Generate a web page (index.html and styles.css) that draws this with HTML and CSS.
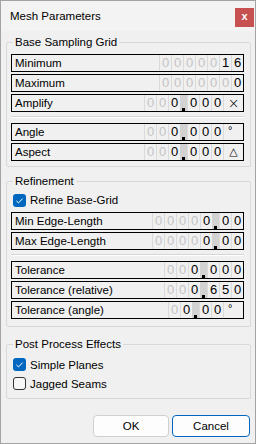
FILE: index.html
```html
<!DOCTYPE html>
<html>
  <head>
    <meta http-equiv="Content-Type" content="text/html;charset=utf-8" />
    <title>Mesh Parameters</title>
    <link rel="stylesheet" href="styles.css">
  </head>

  <body>
    <div class="window">
      <div class="titlebar">
        <span class="title">Mesh Parameters</span>
        <span class="close">x</span>
      </div>

      <fieldset class="group group-base">
        <legend>Base Sampling Grid</legend>
        <div class="field">
          <span class="label">Minimum</span>
          <span class="digits">
            <span class="d dim">0</span><span class="d dim">0</span><span class="d dim">0</span><span class="d dim">0</span><span class="d dim">0</span><span class="d">1</span><span class="d">6</span>
          </span>
        </div>
        <div class="field">
          <span class="label">Maximum</span>
          <span class="digits">
            <span class="d dim">0</span><span class="d dim">0</span><span class="d dim">0</span><span class="d dim">0</span><span class="d dim">0</span><span class="d dim">0</span><span class="d">0</span>
          </span>
        </div>
        <div class="field">
          <span class="label">Amplify</span>
          <span class="digits">
            <span class="d dim">0</span><span class="d dim">0</span><span class="d">0</span><span class="pt"></span><span class="d">0</span><span class="d">0</span><span class="d">0</span><span class="unit unit-x">&times;</span>
          </span>
        </div>
        <div class="sep"></div>
        <div class="field">
          <span class="label">Angle</span>
          <span class="digits">
            <span class="d dim">0</span><span class="d dim">0</span><span class="d">0</span><span class="pt"></span><span class="d">0</span><span class="d">0</span><span class="d">0</span><span class="unit unit-deg">&deg;</span>
          </span>
        </div>
        <div class="field">
          <span class="label">Aspect</span>
          <span class="digits">
            <span class="d dim">0</span><span class="d dim">0</span><span class="d">0</span><span class="pt"></span><span class="d">0</span><span class="d">0</span><span class="d">0</span><span class="unit unit-tri">&#9651;</span>
          </span>
        </div>
      </fieldset>

      <fieldset class="group group-refine">
        <legend>Refinement</legend>
        <label class="check">
          <span class="box on"><svg width="13" height="13" viewBox="0 0 13 13"><path d="M3.4 6.9 L5.5 8.9 L9.6 4.6" fill="none" stroke="#fff" stroke-width="1"/></svg></span>
          Refine Base-Grid
        </label>
        <div class="field">
          <span class="label">Min Edge-Length</span>
          <span class="digits">
            <span class="d dim">0</span><span class="d dim">0</span><span class="d dim">0</span><span class="d dim">0</span><span class="d">0</span><span class="pt"></span><span class="d">0</span><span class="d">0</span>
          </span>
        </div>
        <div class="field">
          <span class="label">Max Edge-Length</span>
          <span class="digits">
            <span class="d dim">0</span><span class="d dim">0</span><span class="d dim">0</span><span class="d dim">0</span><span class="d">0</span><span class="pt"></span><span class="d">0</span><span class="d">0</span>
          </span>
        </div>
        <div class="sep"></div>
        <div class="field">
          <span class="label">Tolerance</span>
          <span class="digits">
            <span class="d dim">0</span><span class="d dim">0</span><span class="d">0</span><span class="pt"></span><span class="d">0</span><span class="d">0</span><span class="d">0</span>
          </span>
        </div>
        <div class="field">
          <span class="label">Tolerance (relative)</span>
          <span class="digits">
            <span class="d dim">0</span><span class="d dim">0</span><span class="d">0</span><span class="pt"></span><span class="d">6</span><span class="d">5</span><span class="d">0</span>
          </span>
        </div>
        <div class="field">
          <span class="label">Tolerance (angle)</span>
          <span class="digits">
            <span class="d dim">0</span><span class="d">0</span><span class="pt"></span><span class="d">0</span><span class="d">0</span><span class="unit unit-deg">&deg;</span>
          </span>
        </div>
      </fieldset>

      <fieldset class="group group-post">
        <legend>Post Process Effects</legend>
        <label class="check">
          <span class="box on"><svg width="13" height="13" viewBox="0 0 13 13"><path d="M3.4 6.9 L5.5 8.9 L9.6 4.6" fill="none" stroke="#fff" stroke-width="1"/></svg></span>
          Simple Planes
        </label>
        <label class="check">
          <span class="box"></span>
          Jagged Seams
        </label>
      </fieldset>

      <div class="buttons">
        <button class="btn btn-ok">OK</button>
        <button class="btn btn-cancel">Cancel</button>
      </div>
    </div>
  </body>
</html>
```

FILE: styles.css
```css
body {
  margin: 0;
  background-color: #f0f0f0;
  font-family: "Liberation Sans", Arial, sans-serif;
  font-size: 11.5px;
  color: #000;
}

.window {
  width: 256px;
  height: 444px;
  box-sizing: border-box;
  border: 1px solid #a3a3a3;
  background-color: #f0f0f0;
}

/* title bar */
.titlebar {
  display: flex;
  justify-content: space-between;
  height: 30px;
  background-color: #f3f3f3;
}

.title {
  padding-left: 9px;
  line-height: 30px;
  font-size: 11.5px;
}

.close {
  width: 19px;
  height: 19px;
  margin: 7px 1px 0 0;
  background-color: #c75050;
  color: #fff;
  font-weight: bold;
  font-size: 11px;
  line-height: 17px;
  text-align: center;
}

/* group boxes */
.group {
  margin: 0 4px 0 5px;
  padding: 5px 6px 5px 4px;
  border: 1px solid #d9d9d9;
  border-radius: 2px;
}

.group legend {
  margin-left: 2px;
  padding: 0 2px;
  line-height: 14px;
  font-size: 11.5px;
}

.group-base {
  margin-top: 4px;
}

.group-refine {
  margin-top: 7px;
  padding-top: 2px;
  padding-bottom: 7px;
}

.group-post {
  margin-top: 10px;
  padding-top: 4px;
  padding-bottom: 5px;
}

/* value rows */
.field {
  display: flex;
  height: 18px;
  box-sizing: border-box;
  border: 1px solid #000;
  background-color: #f0f0f0;
}

.field + .field,
.check + .field {
  margin-top: 2px;
}

.label {
  flex: 1;
  padding-left: 3px;
  line-height: 16px;
  white-space: nowrap;
}

.digits {
  display: flex;
}

.d {
  width: 12px;
  box-sizing: border-box;
  border-left: 1px solid #dadada;
  text-align: center;
  font-size: 13px;
  line-height: 16px;
}

.dim {
  color: #c4c4c4;
}

.pt {
  position: relative;
  width: 7px;
  background-color: #d2d2d2;
}

.pt::after {
  content: "";
  position: absolute;
  left: 2px;
  bottom: 0;
  width: 3px;
  height: 3px;
  background-color: #000;
}

.unit {
  width: 20px;
  box-sizing: border-box;
  border-left: 1px solid #dadada;
  text-align: center;
  font-size: 13px;
  line-height: 16px;
}

.unit-x {
  font-family: "DejaVu Sans", sans-serif;
  font-weight: 200;
  font-size: 14px;
}

.unit-deg {
  padding-left: 4px;
  text-align: left;
  font-size: 11px;
  line-height: 12px;
}

.unit-tri {
  font-family: "DejaVu Sans", sans-serif;
  font-size: 11px;
}

.sep {
  margin: 4px 0 5px 0;
  height: 0;
  border-top: 1px solid #d6d6d6;
  border-bottom: 1px solid #fff;
}

/* checkboxes */
.check {
  display: flex;
  align-items: center;
  height: 20px;
  padding-left: 2px;
  white-space: nowrap;
}

.group-post .check {
  height: 19px;
}

.box {
  width: 13px;
  height: 13px;
  margin-right: 4px;
  box-sizing: border-box;
  border: 1px solid #333;
  border-radius: 3px;
  background-color: #f7f7f7;
}

.box.on {
  border: none;
  background-color: #0067c0;
}

.box svg {
  display: block;
}

/* dialog buttons */
.buttons {
  display: flex;
  justify-content: flex-end;
  gap: 3px;
  margin-top: 16px;
  padding-right: 5px;
}

.btn {
  height: 22px;
  box-sizing: border-box;
  border: 1px solid #d0d0d0;
  border-radius: 4px;
  background-color: #fdfdfd;
  font-family: "Liberation Sans", Arial, sans-serif;
  font-size: 11.5px;
  color: #000;
}

.btn-ok {
  width: 76px;
}

.btn-cancel {
  width: 78px;
  border-color: #0067c0;
}
```
